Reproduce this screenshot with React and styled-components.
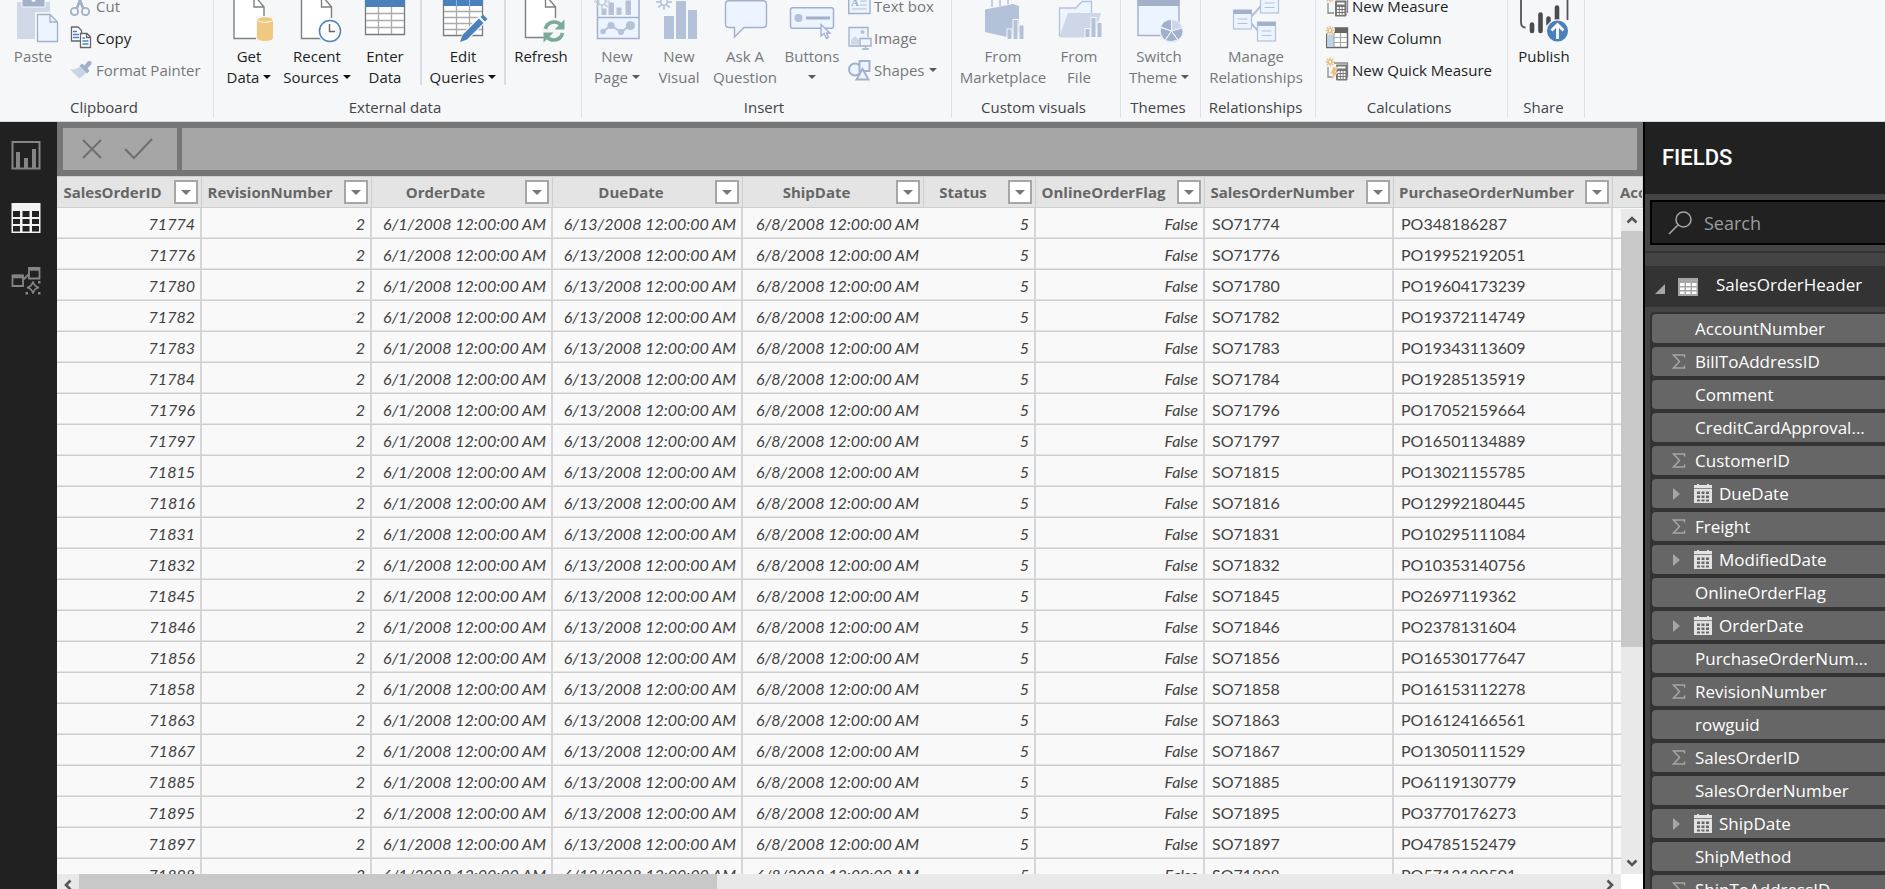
import React from 'react';
import styled, { createGlobalStyle } from 'styled-components';

const Global = createGlobalStyle`
  *, *::before, *::after { box-sizing: border-box; }
  body { margin: 0; overflow: hidden; font-family: "Open Sans", "Noto Sans", sans-serif; }
  button { font: inherit; color: inherit; background: none; border: 0; padding: 0; cursor: pointer; }
`;

const Shell = styled.div`
  display: flex;
  flex-direction: column;
  height: 100vh;
  overflow: hidden;
  background: #212121;
`;

/* Ribbon */

const Ribbon = styled.header`
  display: flex;
  flex: none;
  height: 122px;
  overflow: hidden;
  background: #f5f7f9;
  border-bottom: 1px solid #d6d8d9;
`;

const GroupBox = styled.section`
  display: flex;
  flex-direction: column;
  justify-content: flex-end;
  flex: none;
  width: ${(p) => p.$w}px;
  margin-bottom: 3px;
  border-right: 1px solid #dfe2e5;
`;

const GroupBody = styled.div`
  display: flex;
  align-items: flex-start;
  flex: none;
  height: 96px;
  padding-left: 2px;
`;

const GroupLabel = styled.h2`
  flex: none;
  margin: 0;
  padding: 10px 5px 1px 0;
  font-size: 15px;
  line-height: 20px;
  font-weight: 400;
  text-align: center;
  white-space: nowrap;
  color: #444;
`;

const BigButton = styled.button`
  display: flex;
  flex-direction: column;
  align-items: center;
  flex: none;
  gap: 3px;
  width: ${(p) => p.$w}px;
  font-size: 15px;
  line-height: 21px;
  white-space: nowrap;
  color: ${(p) => (p.disabled ? '#757779' : '#1e1e1e')};
`;

const BigIcon = styled.svg`
  flex: none;
  width: 46px;
  height: 52px;
  overflow: visible;
`;

const SmallColumn = styled.div`
  display: flex;
  flex-direction: column;
  margin: -1px 0 0 ${(p) => p.$gap}px;
`;

const SmallButton = styled.button`
  display: flex;
  align-items: center;
  gap: 4px;
  height: 32px;
  font-size: 15px;
  white-space: nowrap;
  color: ${(p) => (p.disabled ? '#757779' : '#1e1e1e')};
`;

const SmallIcon = styled.svg`
  flex: none;
  width: 22px;
  height: 22px;
  overflow: visible;
`;

const Separator = styled.span`
  width: 2px;
  height: 94px;
  margin: 0 2px;
  background: #d9dcdf;
`;

const Caret = styled.span`
  display: inline-block;
  vertical-align: 4px;
  margin-left: ${(p) => (p.$alone ? 0 : 4)}px;
  border: 4px solid transparent;
  border-top-color: ${(p) => (p.$dim ? '#55585c' : '#111')};
  border-bottom-width: 0;
`;

/* Work area */

const Main = styled.div`
  display: flex;
  flex: 1;
  min-height: 0;
`;

const Rail = styled.nav`
  display: flex;
  flex-direction: column;
  align-items: flex-start;
  gap: 33px;
  flex: none;
  width: 57px;
  padding: 18px 0 0 11px;
  background: #212121;
`;

const RailButton = styled.button`
  height: 30px;
  svg { display: block; }
`;

const Center = styled.main`
  display: flex;
  flex-direction: column;
  flex: 1;
  min-width: 0;
  background: #f9f9f9;
`;

const FormulaBar = styled.div`
  display: flex;
  flex: none;
  gap: 5px;
  padding: 6px;
  background: #767676;
`;

const FormulaActions = styled.div`
  display: flex;
  align-items: center;
  justify-content: center;
  gap: 22px;
  width: 114px;
  height: 42px;
  padding-right: 5px;
  background: #a6a6a6;
  button { display: flex; }
`;

const FormulaInput = styled.input`
  flex: 1;
  min-width: 0;
  padding: 0 8px;
  border: 0;
  border-radius: 0;
  background: #a6a6a6;
  font: 16px "Open Sans", sans-serif;
`;

const GridArea = styled.div`
  position: relative;
  flex: 1;
  min-height: 0;
  overflow: hidden;
`;

const Table = styled.table`
  width: 100%;
  table-layout: fixed;
  border-collapse: separate;
  border-spacing: 0;
`;

const HeadCell = styled.th`
  height: 32px;
  padding: 0;
  overflow: hidden;
  background: #e4e4e4;
  border: 0 solid #cecece;
  border-width: 1px 1px 1px 0;
  font-size: 15px;
  font-weight: 700;
  color: #666;
`;

const HeadInner = styled.div`
  display: flex;
  align-items: center;
  padding-right: 3px;
`;

const HeadText = styled.span`
  flex: 1;
  padding: 0 6px 0 ${(p) => (p.$left ? 7 : 0)}px;
  text-align: ${(p) => (p.$left ? 'left' : 'center')};
  white-space: nowrap;
`;

const FilterButton = styled.button`
  display: flex;
  align-items: center;
  justify-content: center;
  flex: none;
  width: 24px;
  height: 24px;
  border: 2px solid #a6a6a6;
  background: #fff;
  &::after {
    content: "";
    border: 5px solid transparent;
    border-top-color: #777;
    border-bottom-width: 0;
  }
`;

const Cell = styled.td`
  height: 31px;
  padding: 1px 5px 0 7px;
  background: #f9f9f9;
  border: 0 solid #cdcdcd;
  border-width: 0 ${(p) => (p.$open ? 0 : 2)}px 1px 0;
  border-right-color: #d6d6d6;
  box-shadow: inset 0 -1px #e4e4e4;
  font: ${(p) => (p.$text ? 'normal' : 'italic')} 16px/20px Lato, "Open Sans", sans-serif;
  text-align: ${(p) => (p.$text ? 'left' : 'right')};
  white-space: nowrap;
  color: #424242;
`;

const VScroll = styled.div`
  position: absolute;
  top: 33px;
  right: 0;
  bottom: 0;
  display: flex;
  flex-direction: column;
  width: 22px;
  background: #e9e9e9;
`;

const HScroll = styled.div`
  display: flex;
  flex: none;
  height: 22px;
  margin: 0 22px -7px 0;
  background: #e9e9e9;
  box-shadow: 22px 0 #fff;
`;

const ScrollButton = styled.button`
  display: flex;
  align-items: center;
  justify-content: center;
  flex: none;
  width: 22px;
  height: 22px;
`;

const Track = styled.div`
  display: flex;
  flex-direction: ${(p) => (p.$vertical ? 'column' : 'row')};
  flex: 1;
  min-height: 0;
`;

const Thumb = styled.div`
  flex: 0 0 ${(p) => p.$size};
  background: #c8c8c8;
`;

/* Fields pane */

const Pane = styled.aside`
  display: flex;
  flex-direction: column;
  flex: none;
  width: 242px;
  overflow: hidden;
  border-left: 2px solid #000;
  background: #444;
`;

const PaneTitle = styled.h1`
  flex: none;
  margin: 0;
  padding-left: 17px;
  font: 500 22px/72px Roboto, sans-serif;
  color: #fff;
  background: #212121;
`;

const SearchBox = styled.label`
  display: flex;
  align-items: center;
  gap: 12px;
  flex: none;
  height: 45px;
  margin: 6px 0 6px 5px;
  padding-left: 16px;
  border: 2px solid #000;
  border-right: 0;
  background: #212121;
`;

const SearchInput = styled.input`
  flex: 1;
  min-width: 0;
  padding: 0;
  border: 0;
  outline: 0;
  background: none;
  color: #fff;
  font: 18px "Open Sans", sans-serif;
  &::placeholder { color: #9c9c9c; opacity: 1; }
`;

const TableRow = styled.button`
  display: flex;
  align-items: center;
  flex: none;
  height: 41px;
  padding: 0 0 0 10px;
  background: #333;
  color: #fff;
  font-size: 17px;
  svg:first-child { margin: 4px 13px 0 0; }
  span { margin: -5px 0 0 18px; }
`;

const PaneRule = styled.hr`
  flex: none;
  width: 100%;
  height: 2px;
  margin: 0 0 13px;
  border: 0;
  background: #333;
`;

const FieldList = styled.ul`
  display: flex;
  flex-direction: column;
  gap: 4px;
  margin: 5px 0 0 5px;
  padding: 2px 0 0 2px;
  list-style: none;
  background: #333;
  border-radius: 4px 0 0 0;
`;

const Field = styled.li`
  display: flex;
  align-items: center;
  flex: none;
  height: 29px;
  border-radius: 4px 0 0 4px;
  background: #666;
  color: #fff;
  font-size: 17px;
  white-space: nowrap;
`;

const FieldMark = styled.span`
  display: flex;
  align-items: center;
  flex: none;
  width: ${(p) => (p.$date ? 67 : 43)}px;
  padding-left: ${(p) => (p.$date ? 21 : 20)}px;
  gap: 14px;
`;

/* Icon drawings */

const L = '#a3b0ca';
const M = '#b3c1d9';
const P = '#ebf4ff';
const BG = '#f5f7f9';

const Page = ({ x, b }) => (
  <g fill="#fff" stroke="#808080" strokeWidth="1.4">
    <path d={`M${x} -9H${x + 20}L${x + 30} 7V31M${x + 30} 7V${b}H${x}V-9`} stroke="none" />
    <path d={`M${x} -9V${b}H${x + 22}M${x + 30} 18V7H${x + 20}V-5L${x + 30} 7`} fill="none" />
  </g>
);

const Sun = ({ x, y, r = 7, c = L, w = 1.6 }) => (
  <g stroke={c} strokeWidth={w} fill={BG}>
    {[0, 45, 90, 135].map((a) => (
      <path key={a} d={`M${-r} 0H${r}`} transform={`translate(${x} ${y}) rotate(${a})`} />
    ))}
    <circle cx={x} cy={y} r={r * 0.42} />
  </g>
);

const bars = (list, bottom, fill) =>
  list.map(([x, y, w]) => <rect key={x} x={x} y={y} width={w} height={bottom - y} fill={fill} stroke={BG} strokeWidth="1" />);

const big = {
  paste: (
    <>
      <path d="M7 2H40V39H7Z" fill="#d0d8e8" />
      <path d="M12 -1H18V-6H29V-1H35V7H12Z" fill={L} stroke={BG} />
      <circle cx="23.5" cy="0" r="2" fill={BG} />
      <path d="M27 14H40L48 22V42H27Z" fill={P} stroke={BG} strokeWidth="4" />
      <path d="M27.500 14.500H40L47.500 22V41.500H27.500ZM40 14.500V22H47.500" fill={P} stroke={L} strokeWidth="1.300" />
    </>
  ),
  getData: (
    <>
      <Page x={8} b={38.5} />
      <path d="M30 16H48V42H30Z" fill={BG} />
      <path d="M31 20V38C31 42 47 42 47 38V20Z" fill="#eec97f" />
      <ellipse cx="39" cy="19.500" rx="8" ry="2.800" fill="#eec97f" stroke="#fff" />
    </>
  ),
  recent: (
    <>
      <Page x={7.5} b={38.5} />
      <circle cx="36" cy="31" r="12.500" fill={BG} />
      <circle cx="36" cy="31" r="10.500" fill="#fff" stroke="#4f83bd" strokeWidth="1.500" />
      <path d="M35.500 24V31.500H41" fill="none" stroke="#666" strokeWidth="1.400" />
    </>
  ),
  enter: (
    <>
      <path d="M3.500 -9H42.500V34.500H3.500Z" fill="#fff" stroke="#7a7a7a" strokeWidth="1.300" />
      <path d="M4 13.500H42M4 20.500H42M4 27.500H42M16.500 7V34M29.500 7V34" stroke="#aaa" strokeWidth="1.300" />
      <path d="M3 -9H43V7H3Z" fill="#4a80bb" />
    </>
  ),
  edit: (
    <>
      <path d="M3.500 -9H42.500V35.500H3.500Z" fill="#fff" stroke="#7a7a7a" strokeWidth="1.300" />
      <path d="M4 11.500H42M4 17.500H42M4 23.500H42M4 29.500H42M16.500 -9V35M29.500 -9V35" stroke="#aaa" strokeWidth="1.300" />
      <path d="M3 -9H43V6H3Z" fill="#4a80bb" />
      <path d="M16.500 -9V6M29.500 -9V6" stroke="#8fb2d8" />
      <path d="M20 43L22 34L41 14L48 20L29 39Z" fill={BG} />
      <path d="M20 42L22.500 35L39 18.500L43.500 23L27 39.500ZM40.500 17L43 14.500L47.500 19L45 21.500Z" fill="#4a80bb" />
    </>
  ),
  refresh: (
    <>
      <Page x={7.5} b={37.5} />
      <circle cx="36" cy="31" r="12" fill={BG} />
      <path d="M27.500 29C29 22 38 19.500 43 25M44.500 33C43 40 34 42.500 29 37" fill="none" stroke="#7bab98" strokeWidth="3.600" />
      <path d="M46.500 19.500V29.500H36.500ZM25.500 42.500V32.500H35.500Z" fill="#7bab98" />
    </>
  ),
  newPage: (
    <>
      <path d="M3.500 -9H45V38.500H3.500ZM3.500 17.500H45" fill={P} stroke={L} strokeWidth="1.500" />
      {bars([[7, 8, 6], [14, 2, 6.500], [22, 7, 6], [31, 0, 6.500]], 15.5, M)}
      <path d="M9 31.500L17 25.500L27 32L36 25.500" fill="none" stroke={M} strokeWidth="2" />
      <g fill={M}>
        <circle cx="9" cy="31.500" r="2.800" /><circle cx="17" cy="25.500" r="3.600" />
        <circle cx="27" cy="32" r="3" /><circle cx="36.500" cy="25.500" r="4.600" />
      </g>
      <Sun x={8} y={1.5} r={8} c="#c3cee0" />
    </>
  ),
  newVisual: (
    <>
      {bars([[7.5, 15.5, 11], [19.5, 0.5, 11], [31.5, 9.5, 10]], 39.5, M)}
      <circle cx="8" cy="2" r="8" fill={BG} />
      <Sun x={8} y={2} r={8} c="#b5c2d8" />
    </>
  ),
  ask: <path d="M7 .8H41Q44.500 .8 44.500 4V24Q44.500 27.500 41 27.500H22L12.500 37V27.500H7Q3.500 27.500 3.500 24V4Q3.500 .8 7 .8Z" fill={P} stroke={L} strokeWidth="1.400" />,
  buttons: (
    <>
      <rect x="1.500" y="7.800" width="43" height="20.500" rx="2" fill={P} stroke={L} strokeWidth="1.500" />
      <circle cx="9.500" cy="18" r="4" fill={M} />
      <path d="M17 18H41" stroke={L} strokeWidth="3" />
      <path d="M32 24.500V36L35 33.500L37.500 38.500L39.500 37.500L37.500 33H41Z" fill={P} stroke={L} strokeWidth="1.400" />
    </>
  ),
  marketplace: (
    <>
      <path d="M12 7V0Q12 -4 16 -4T20 0V4M20 6V0Q20 -5 24 -5T28 0V4" fill="none" stroke={M} strokeWidth="1.500" />
      <path d="M5 9.500L33 4L39 6V32L27 37L5 32Z" fill={M} />
      {bars([[27, 29, 5], [33, 19.5, 5], [39, 25, 5]], 39.5, M)}
    </>
  ),
  file: (
    <>
      <path d="M3.500 36V8H20L26 1.500H35.500V14" fill={P} stroke={M} strokeWidth="1.300" />
      <path d="M3 37.500L12 13H45L38 37.500Z" fill="#cdd7e6" />
      {bars([[29, 28.500, 5], [35, 17.5, 5], [41, 22.5, 5]], 37.5, M)}
    </>
  ),
  theme: (
    <>
      <path d="M2 -9H43V35.500H2Z" fill={P} stroke={L} strokeWidth="1.400" />
      <path d="M1.500 -9H43.500V6H1.500Z" fill={L} />
      <circle cx="35.500" cy="31" r="11.500" fill="#cdd7e6" stroke={BG} />
      <path d="M35.500 31V19.500A11 11 0 0 0 24.500 27ZM35.500 31L46.500 28A11 11 0 0 1 42 40ZM35.500 31L29 40.500Q35 43 42 40ZM35.500 31L24.500 27.500Q23 35 29 40.500Z" fill={L} stroke={P} />
    </>
  ),
  relations: (
    <>
      <path d="M17 18L28 6M17 22L26 32" stroke={M} strokeWidth="2" />
      {[[0.5, 10], [27.5, -6], [24.5, 22]].map(([x, y]) => (
        <g key={x}>
          <rect x={x} y={y} width="18" height="19" fill={P} stroke={M} strokeWidth="1.200" />
          <path d={`M${x} ${y}h18v4h-18z`} fill={L} />
          <path d={`M${x + 4} ${y + 9}h10M${x + 4} ${y + 13.5}h10`} stroke={M} />
        </g>
      ))}
    </>
  ),
  publish: (
    <>
      <path d="M0 -9V22Q0 27.500 4.500 27.500M46.500 -9V20" fill="none" stroke="#555" strokeWidth="1.800" />
      <path d="M11 24.500V31M19.500 14.500V31M27.500 18.500V24M36 7.500V20" stroke="#4c4c4c" strokeWidth="4.600" strokeLinecap="round" />
      <circle cx="36.500" cy="31" r="11.800" fill={BG} />
      <circle cx="36.500" cy="31" r="10.500" fill="#4a80bb" />
      <path d="M36.500 39V25M30.500 30.500L36.500 24.500L42.500 30.500" fill="none" stroke="#fff" strokeWidth="2.800" />
    </>
  ),
};

const Calc = ({ x }) => (
  <>
    <path d="M2 8V18H8M8 4H21.500V18" fill="none" stroke="#8a8a8a" strokeWidth="1.300" />
    <rect x={x} y="5.500" width="11.500" height="16" rx="1" fill="#777" />
    <path d={`M${x + 2} 8.500h7.500`} stroke="#fff" strokeWidth="2" />
    <path d={`M${x + 2} 13h7.500M${x + 2} 16h7.500M${x + 2} 19h7.500`} stroke="#fff" strokeWidth="1.800" strokeDasharray="1.800 1" />
  </>
);

const small = {
  cut: (
    <g fill="none" stroke={L}>
      <path d="M5 -6L13.500 14M15 -6L6.500 14" strokeWidth="2.800" />
      <circle cx="4.500" cy="16.500" r="3.600" strokeWidth="1.900" />
      <circle cx="15.500" cy="16.500" r="3.600" strokeWidth="1.900" />
    </g>
  ),
  copy: (
    <g fill="#fff" stroke="#666" strokeWidth="1.300">
      <path d="M1.500 0H8L11.500 3.500V14H1.500Z" />
      <path d="M3 4.500H7M3 7.500H9M3 10.500H9" stroke="#4a80bb" />
      <path d="M10.500 6.500H17L20.500 10V20.500H10.500ZM16.500 6.500V10.500H20.500" />
      <path d="M12.500 11H15M12.500 14H18.500M12.500 17H18.500" stroke="#4a80bb" />
    </g>
  ),
  painter: (
    <>
      <path d="M0 10.500C5 11 8 9 10 7.500L16 14Q13 17 9.500 19.500Z" fill="#c9d4e5" />
      <path d="M9.500 7L12 4.500L14.500 6.500L18 2L21.500 2.500V5L17.500 9.500L19.500 12L17 14.500Z" fill={L} />
    </>
  ),
  textBox: (
    <>
      <path d="M.7 -5H22V18.500H.7Z" fill={P} stroke={L} strokeWidth="1.400" />
      <text x="3" y="11" fontSize="11" fontWeight="700" fill={L} fontFamily="Liberation Serif, serif">A</text>
      <path d="M12 6H19M12 10H19M3.500 14H19" stroke={M} strokeWidth="1.200" />
    </>
  ),
  image: (
    <>
      <path d="M1 .5H20V19H1Z" fill={P} stroke={L} strokeWidth="1.300" />
      <circle cx="14.500" cy="5" r="2" fill={M} />
      <path d="M3 17.500V13L7 9L11 13V17.500Z" fill="#cdd7e6" />
      <path d="M11 10H24V20H11Z" fill={BG} />
      <path d="M12 11.500H23V19H12ZM17.500 19V22M14 22H21" fill={P} stroke={L} strokeWidth="1.400" />
    </>
  ),
  shapes: (
    <g fill={P} stroke={L} strokeWidth="1.900">
      <circle cx="7" cy="10.500" r="6" />
      <path d="M11.500 2H21.500V12H11.500Z" />
      <path d="M14.500 10L8.500 20.500H20.500Z" />
    </g>
  ),
  measure: <><Calc x={9} /><Sun x={4} y={3} r={4.500} c="#e9bf7c" w={1.300} /></>,
  column: (
    <>
      <path d="M.7 1H21.500V20.500H.7Z" fill="#fff" stroke="#666" strokeWidth="1.400" />
      <path d="M1.300 6H8V20H1.300Z" fill="#bcd3e8" />
      <path d="M8 1H22V6H8Z" fill="#666" />
      <path d="M8 6V20M14.500 6V20M8 10.500H21M8 15.500H21" stroke="#aaa" strokeWidth="1.200" />
      <circle cx="4" cy="3" r="5" fill={BG} />
      <Sun x={4} y={3.5} r={4.500} c="#e9bf7c" w={1.300} />
    </>
  ),
  quick: (
    <>
      <Calc x={10} />
      <path d="M7 8H12L9.500 13H12L5 22L7 15H4Z" fill="#eec083" stroke={BG} strokeWidth=".6" />
      <Sun x={4} y={3} r={4.500} c="#e9bf7c" w={1.300} />
    </>
  ),
};

function Big({ icon, w, lines, caret, off }) {
  return (
    <BigButton $w={w} disabled={off}>
      <BigIcon viewBox="0 -9 46 52" aria-hidden="true">{big[icon]}</BigIcon>
      <span>
        {lines[0]}
        {(lines[1] || caret) && <br />}
        {lines[1]}
        {caret && <Caret $dim={off} $alone={!lines[1]} />}
      </span>
    </BigButton>
  );
}

function Small({ icon, label, caret, off }) {
  return (
    <SmallButton disabled={off}>
      <SmallIcon viewBox="0 0 22 22" aria-hidden="true">{small[icon]}</SmallIcon>
      <span>{label}{caret && <Caret $dim={off} />}</span>
    </SmallButton>
  );
}

function Group({ label, w, children }) {
  return (
    <GroupBox $w={w}>
      <GroupBody>{children}</GroupBody>
      <GroupLabel>{label}</GroupLabel>
    </GroupBox>
  );
}

/* Data */

const columns = [
  ['SalesOrderID', 145], ['RevisionNumber', 170], ['OrderDate', 181], ['DueDate', 190], ['ShipDate', 181],
  ['Status', 112], ['OnlineOrderFlag', 169], ['SalesOrderNumber', 189], ['PurchaseOrderNumber', 219],
];

const orders = [
  [71774, '348186287'], [71776, '19952192051'], [71780, '19604173239'], [71782, '19372114749'],
  [71783, '19343113609'], [71784, '19285135919'], [71796, '17052159664'], [71797, '16501134889'],
  [71815, '13021155785'], [71816, '12992180445'], [71831, '10295111084'], [71832, '10353140756'],
  [71845, '2697119362'], [71846, '2378131604'], [71856, '16530177647'], [71858, '16153112278'],
  [71863, '16124166561'], [71867, '13050111529'], [71885, '6119130779'], [71895, '3770176273'],
  [71897, '4785152479'], [71898, '5713190501'],
];

const fields = [
  ['AccountNumber'], ['BillToAddressID', 'sum'], ['Comment'], ['CreditCardApproval...'], ['CustomerID', 'sum'],
  ['DueDate', 'date'], ['Freight', 'sum'], ['ModifiedDate', 'date'], ['OnlineOrderFlag'], ['OrderDate', 'date'],
  ['PurchaseOrderNum...'], ['RevisionNumber', 'sum'], ['rowguid'], ['SalesOrderID', 'sum'], ['SalesOrderNumber'],
  ['ShipDate', 'date'], ['ShipMethod'], ['ShipToAddressID', 'sum'],
];

const Chevron = ({ turn }) => (
  <svg width="12" height="12" viewBox="0 0 12 12" aria-hidden="true">
    <path d="M1.500 8.500L6 4L10.500 8.500" fill="none" stroke="#555" strokeWidth="2.600" transform={`rotate(${turn} 6 6)`} />
  </svg>
);

const Sigma = () => (
  <svg width="14" height="15" viewBox="0 0 14 15" aria-hidden="true">
    <path d="M12.500 3.500V1H1.500L7.500 7.500L1.500 14H12.500V11.500" fill="none" stroke="#a6a6a6" strokeWidth="1.500" />
  </svg>
);

const DateMark = () => (
  <>
    <svg width="7" height="12" viewBox="0 0 7 12" aria-hidden="true"><path d="M0 0L7 6L0 12Z" fill="#a6a6a6" /></svg>
    <svg width="18" height="20" viewBox="0 0 18 20" aria-hidden="true">
      <path d="M0 1H18V19H0ZM3 -1H5V2H3ZM13 -1H15V2H13Z" fill="#e2e2e2" />
      <path d="M0 4.500H18" stroke="#888" />
      <path d="M3 7.500H6V10H3ZM7.500 7.500H10.500V10H7.500ZM12 7.500H15V10H12ZM3 11.500H6V14H3ZM7.500 11.500H10.500V14H7.500ZM12 11.500H15V14H12ZM3 15.500H6V17.500H3ZM7.500 15.500H10.500V17.500H7.500ZM12 15.500H15V17.500H12Z" fill="#666" />
    </svg>
  </>
);

export default function App() {
  return (
    <Shell>
      <Global />
      <Ribbon>
        <Group label="Clipboard" w={214}>
          <Big icon="paste" w={62} lines={['Paste']} off />
          <SmallColumn $gap={6}>
            <Small icon="cut" label="Cut" off />
            <Small icon="copy" label="Copy" />
            <Small icon="painter" label="Format Painter" off />
          </SmallColumn>
        </Group>
        <Group label="External data" w={368}>
          <Big icon="getData" w={66} lines={['Get', 'Data']} caret />
          <Big icon="recent" w={70} lines={['Recent', 'Sources']} caret />
          <Big icon="enter" w={66} lines={['Enter', 'Data']} />
          <Separator />
          <Big icon="edit" w={78} lines={['Edit', 'Queries']} caret />
          <Separator />
          <Big icon="refresh" w={66} lines={['Refresh']} />
        </Group>
        <Group label="Insert" w={370}>
          <Big icon="newPage" w={66} lines={['New', 'Page']} caret off />
          <Big icon="newVisual" w={58} lines={['New', 'Visual']} off />
          <Big icon="ask" w={74} lines={['Ask A', 'Question']} off />
          <Big icon="buttons" w={60} lines={['Buttons']} caret off />
          <SmallColumn $gap={6}>
            <Small icon="textBox" label="Text box" off />
            <Small icon="image" label="Image" off />
            <Small icon="shapes" label="Shapes" caret off />
          </SmallColumn>
        </Group>
        <Group label="Custom visuals" w={169}>
          <Big icon="marketplace" w={98} lines={['From', 'Marketplace']} off />
          <Big icon="file" w={54} lines={['From', 'File']} off />
        </Group>
        <Group label="Themes" w={80}>
          <Big icon="theme" w={72} lines={['Switch', 'Theme']} caret off />
        </Group>
        <Group label="Relationships" w={115}>
          <Big icon="relations" w={106} lines={['Manage', 'Relationships']} off />
        </Group>
        <Group label="Calculations" w={192}>
          <SmallColumn $gap={8}>
            <Small icon="measure" label="New Measure" />
            <Small icon="column" label="New Column" />
            <Small icon="quick" label="New Quick Measure" />
          </SmallColumn>
        </Group>
        <Group label="Share" w={77}>
          <Big icon="publish" w={68} lines={['Publish']} />
        </Group>
      </Ribbon>

      <Main>
        <Rail>
          <RailButton aria-label="Report">
            <svg width="30" height="30" viewBox="0 0 30 30">
              <path d="M1.500 2H28.500V28.500H1.500Z" fill="none" stroke="#858585" strokeWidth="2" />
              <path d="M5 12H9V28H5ZM13 18H17V28H13ZM21 9H25V28H21Z" fill="#858585" />
            </svg>
          </RailButton>
          <RailButton aria-label="Data">
            <svg width="30" height="30" viewBox="0 0 30 30">
              <path d="M.5 0H29.500V30H.5Z" fill="#f2f2f2" />
              <path d="M2 8H9V14H2ZM11.500 8H18.500V14H11.500ZM21 8H28V14H21ZM2 16H9V21H2ZM11.500 16H18.500V21H11.500ZM21 16H28V21H21ZM2 23H9V28.500H2ZM11.500 23H18.500V28.500H11.500ZM21 23H28V28.500H21Z" fill="#212121" />
            </svg>
          </RailButton>
          <RailButton aria-label="Model">
            <svg width="30" height="30" viewBox="0 0 30 30">
              <g fill="none" stroke="#858585" strokeWidth="1.800">
                <path d="M1.500 9.500H12V20H1.500ZM18 2H28.500V12.500H18ZM12 14L18 8" />
                <path d="M1.500 10.500H12M18 3H28.500" strokeWidth="3.500" />
                <path d="M22 15.500Q23 20.500 28 21.500Q23 22.500 22 27.500Q21 22.500 16 21.500Q21 20.500 22 15.500Z" strokeWidth="1.500" />
              </g>
              <path d="M27 15H29.500V17.500H27ZM14.500 26H17V28.500H14.500ZM27 26H29.500V28.500H27Z" fill="#858585" />
            </svg>
          </RailButton>
        </Rail>

        <Center>
          <FormulaBar>
            <FormulaActions>
              <button aria-label="Cancel">
                <svg width="20" height="20" viewBox="0 0 20 20"><path d="M1 1L19 19M19 1L1 19" stroke="#6e6e6e" strokeWidth="1.800" /></svg>
              </button>
              <button aria-label="Commit">
                <svg width="29" height="22" viewBox="0 0 29 22"><path d="M1 11L10 20L28 1" fill="none" stroke="#6e6e6e" strokeWidth="2" /></svg>
              </button>
            </FormulaActions>
            <FormulaInput aria-label="Formula" />
          </FormulaBar>

          <GridArea>
            <Table>
              <colgroup>
                {columns.map(([name, w]) => <col key={name} width={w} />)}
                <col />
              </colgroup>
              <thead>
                <tr>
                  {columns.map(([name]) => (
                    <HeadCell key={name} scope="col">
                      <HeadInner>
                        <HeadText>{name}</HeadText>
                        <FilterButton aria-label={`Filter ${name}`} />
                      </HeadInner>
                    </HeadCell>
                  ))}
                  <HeadCell scope="col"><HeadInner><HeadText $left>AccountNumber</HeadText></HeadInner></HeadCell>
                </tr>
              </thead>
              <tbody>
                {orders.map(([id, po]) => (
                  <tr key={id}>
                    <Cell>{id}</Cell>
                    <Cell>2</Cell>
                    <Cell>6/1/2008 12:00:00 AM</Cell>
                    <Cell>6/13/2008 12:00:00 AM</Cell>
                    <Cell $open>6/8/2008 12:00:00 AM</Cell>
                    <Cell>5</Cell>
                    <Cell>False</Cell>
                    <Cell $text>SO{id}</Cell>
                    <Cell $text>PO{po}</Cell>
                    <Cell $open />
                  </tr>
                ))}
              </tbody>
            </Table>
            <VScroll>
              <ScrollButton aria-label="Scroll up"><Chevron turn={0} /></ScrollButton>
              <Track $vertical><Thumb $size="67%" /></Track>
              <ScrollButton aria-label="Scroll down"><Chevron turn={180} /></ScrollButton>
            </VScroll>
          </GridArea>
          <HScroll>
            <ScrollButton aria-label="Scroll left"><Chevron turn={-90} /></ScrollButton>
            <Track><Thumb $size="42%" /></Track>
            <ScrollButton aria-label="Scroll right"><Chevron turn={90} /></ScrollButton>
          </HScroll>
        </Center>

        <Pane>
          <PaneTitle>FIELDS</PaneTitle>
          <SearchBox>
            <svg width="24" height="24" viewBox="0 0 24 24" aria-hidden="true">
              <circle cx="15.500" cy="8.500" r="7.500" fill="none" stroke="#a6a6a6" strokeWidth="1.500" />
              <path d="M10 14L1 23" stroke="#a6a6a6" strokeWidth="1.600" />
            </svg>
            <SearchInput aria-label="Search fields" placeholder="Search" />
          </SearchBox>
          <PaneRule />
          <TableRow>
            <svg width="10" height="10" viewBox="0 0 10 10" aria-hidden="true"><path d="M10 0V10H0Z" fill="#a6a6a6" /></svg>
            <svg width="20" height="18" viewBox="0 0 20 18" aria-hidden="true">
              <path d="M0 0H20V18H0Z" fill="#a6a6a6" />
              <path d="M2 5H6.500V8H2ZM8 5H12.500V8H8ZM14 5H18.500V8H14ZM2 9.500H6.500V12H2ZM8 9.500H12.500V12H8ZM14 9.500H18.500V12H14ZM2 13.500H6.500V16H2ZM8 13.500H12.500V16H8ZM14 13.500H18.500V16H14Z" fill="#fff" />
            </svg>
            <span>SalesOrderHeader</span>
          </TableRow>
          <FieldList>
            {fields.map(([name, kind]) => (
              <Field key={name}>
                <FieldMark $date={kind === 'date'}>
                  {kind === 'sum' && <Sigma />}
                  {kind === 'date' && <DateMark />}
                </FieldMark>
                {name}
              </Field>
            ))}
          </FieldList>
        </Pane>
      </Main>
    </Shell>
  );
}
